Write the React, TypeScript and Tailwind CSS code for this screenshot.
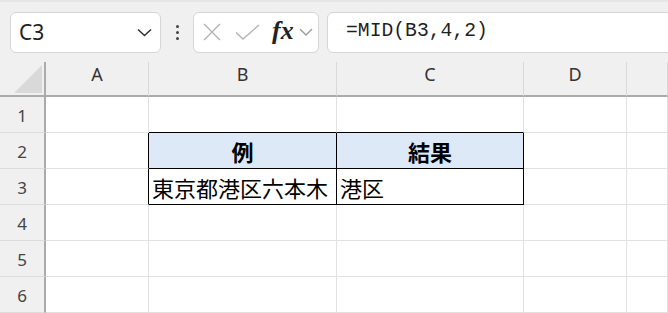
import React from "react";

const gridLine = "border-[#e1e1e1]";

function NameBox() {
  return (
    <div className="flex shrink-0 items-center justify-between w-[151px] h-[41px] ml-[10px] bg-white border border-[#d6d6d6] rounded-md pl-[8px] pr-[8px]">
      <span className="text-[21px] text-[#1f1f1f] font-['Noto_Sans',sans-serif] leading-none">C3</span>
      <svg width="15" height="9" viewBox="0 0 15 9" fill="none">
        <path d="M1 1.5 L7.5 7.5 L14 1.5" stroke="#333" strokeWidth="1.6" />
      </svg>
    </div>
  );
}

function FxBox() {
  return (
    <div className="flex shrink-0 items-center w-[126px] h-[41px] bg-white border border-[#d6d6d6] rounded-md">
      <svg className="ml-[8px]" width="20" height="18" viewBox="0 0 20 18" fill="none">
        <path d="M2 1 L18 17 M18 1 L2 17" stroke="#b4b4b4" strokeWidth="1.4" />
      </svg>
      <svg className="ml-[13px]" width="25" height="16" viewBox="0 0 25 16" fill="none">
        <path d="M1 8.5 L8 15 L24 1" stroke="#b4b4b4" strokeWidth="1.4" />
      </svg>
      <span className="ml-[12px] text-[26px] italic font-bold text-[#222] font-['Liberation_Serif',serif] leading-none mt-[-3px]">
        fx
      </span>
      <svg className="ml-[5px]" width="14" height="8" viewBox="0 0 14 8" fill="none">
        <path d="M1 1 L7 7 L13 1" stroke="#9a9a9a" strokeWidth="1.3" />
      </svg>
    </div>
  );
}

function Toolbar() {
  return (
    <div className="flex items-center h-[62px] bg-[#f0f0f0] border-t-2 border-[#e6e6e6] overflow-hidden">
      <NameBox />
      <div className="flex shrink-0 flex-col gap-[3px] w-[32px] items-center">
        <span className="w-[3px] h-[3px] bg-[#444] rounded-full" />
        <span className="w-[3px] h-[3px] bg-[#444] rounded-full" />
        <span className="w-[3px] h-[3px] bg-[#444] rounded-full" />
      </div>
      <FxBox />
      <div className="flex shrink-0 items-center h-[41px] ml-[8px] w-[400px] bg-white border border-[#d6d6d6] rounded-l-md pl-[18px]">
        <span className="text-[19.7px] text-[#1f1f1f] font-['Liberation_Mono',monospace] leading-none">
          =MID(B3,4,2)
        </span>
      </div>
    </div>
  );
}

const headerCell =
  "flex justify-center pt-[3px] border-r border-[#d9d9d9] border-b-2 border-b-[#ababab] text-[18px] leading-[18px] text-[#333] font-['Noto_Sans',sans-serif]";

// borders for data cells: [row][col] where col 0 = A
function cellClass(r: number, c: number) {
  const base = "flex items-center border-r border-b";
  if (r === 1 && (c === 1 || c === 2)) return `${base} border-r-[#e1e1e1] border-b-black`;
  if ((r === 2 || r === 3) && c === 0) return `${base} border-r-black border-b-[#e1e1e1]`;
  if (r === 2 && (c === 1 || c === 2)) return `${base} border-black bg-[#dde9f7] justify-center`;
  if (r === 3 && (c === 1 || c === 2)) return `${base} border-black pl-[3px]`;
  return `${base} ${gridLine}`;
}

const data: Record<string, string> = {
  "2-1": "例",
  "2-2": "結果",
  "3-1": "東京都港区六本木",
  "3-2": "港区",
};

export default function App() {
  const rows = [1, 2, 3, 4, 5, 6];
  const cols = ["A", "B", "C", "D", ""];
  return (
    <div className="w-[668px] h-[313px] overflow-hidden bg-white">
      <Toolbar />
      <div className="grid grid-cols-[46px_103px_188px_187px_103px_1fr] grid-rows-[35px_repeat(6,36px)]">
        <div className="relative bg-[#f0f0f0] border-r-2 border-r-[#ababab] border-b-2 border-b-[#ababab]">
          <svg className="absolute left-[14px] top-[3px]" width="28" height="28" viewBox="0 0 28 28">
            <path d="M28 0 L28 28 L0 28 Z" fill="#d9d9d9" />
          </svg>
        </div>
        {cols.map((c, i) => (
          <div key={i} className={`${headerCell} bg-[#f0f0f0]`}>
            {c}
          </div>
        ))}
        {rows.map((r) => (
          <React.Fragment key={r}>
            <div className="flex justify-center items-center pt-[3px] bg-[#f0f0f0] border-r-2 border-r-[#ababab] border-b border-b-[#dcdcdc] text-[17px] text-[#444] font-['Noto_Sans',sans-serif]">
              {r}
            </div>
            {cols.map((_, c) => {
              const text = data[`${r}-${c}`];
              const bold = r === 2;
              return (
                <div key={c} className={cellClass(r, c)}>
                  {text && (
                    <span
                      className={`text-[22px] leading-none text-black font-['Noto_Sans_CJK_JP',sans-serif] ${
                        bold ? "font-bold" : "font-normal"
                      }`}
                    >
                      {text}
                    </span>
                  )}
                </div>
              );
            })}
          </React.Fragment>
        ))}
      </div>
    </div>
  );
}
